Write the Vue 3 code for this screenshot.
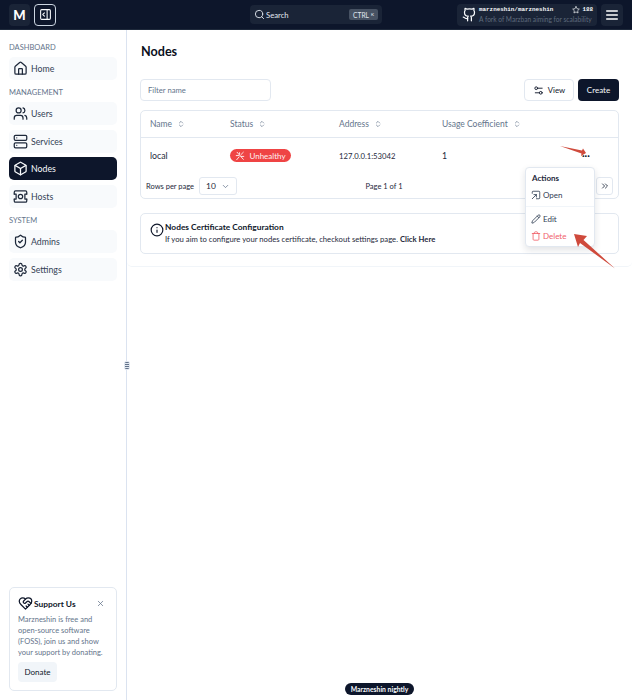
<template>
  <div class="page">
    <header class="topbar">
      <div class="top-left">
        <div class="logo">M</div>
        <button class="collapse">
          <svg class="ic" width="13" height="13" viewBox="0 0 24 24">
            <rect x="3" y="3" width="18" height="18" rx="2" />
            <path d="M15 3v18" />
            <path d="m10 15-3-3 3-3" />
          </svg>
        </button>
      </div>
      <div class="search">
        <span class="search-label">
          <svg class="ic" width="11" height="11" viewBox="0 0 24 24">
            <circle cx="11" cy="11" r="8" />
            <path d="m21 21-4.3-4.3" />
          </svg>
          Search
        </span>
        <span class="kbd">CTRL <small>K</small></span>
      </div>
      <div class="top-right">
        <div class="repo">
          <svg class="ic repo-icon" width="15" height="15" viewBox="0 0 24 24">
            <path d="M15 22v-4a4.8 4.8 0 0 0-1-3.5c3 0 6-2 6-5.5.08-1.25-.27-2.48-1-3.5.28-1.15.28-2.35 0-3.5 0 0-1 0-3 1.5-2.64-.5-5.36-.5-8 0C6 2 5 2 5 2c-.3 1.15-.3 2.35 0 3.5A5.403 5.403 0 0 0 4 9c0 3.5 3 5.5 6 5.5-.39.49-.68 1.05-.85 1.65-.17.6-.22 1.23-.15 1.85v4" />
            <path d="M9 18c-4.51 2-5-2-7-2" />
          </svg>
          <div class="repo-text">
            <div class="repo-line">
              <span class="repo-name">marzneshin/marzneshin</span>
              <span class="repo-stars">
                <svg class="ic" width="8" height="8" viewBox="0 0 24 24">
                  <path d="M12 2l3.09 6.26L22 9.27l-5 4.87 1.18 6.88L12 17.77l-6.18 3.25L7 14.14 2 9.27l6.91-1.01L12 2z" />
                </svg>
                188
              </span>
            </div>
            <div class="repo-desc">A fork of Marzban aiming for scalability</div>
          </div>
        </div>
        <button class="menu">
          <svg class="ic" width="16" height="16" viewBox="0 0 24 24">
            <path d="M4 6h16M4 12h16M4 18h16" />
          </svg>
        </button>
      </div>
    </header>

    <div class="body">
      <aside class="sidebar">
        <nav class="nav">
          <template v-for="group in navGroups" :key="group.title">
            <div class="nav-title">{{ group.title }}</div>
            <div class="nav-items">
              <a v-for="item in group.items" :key="item.label" class="nav-item" :class="{ active: item.label === 'Nodes' }">
                <svg class="ic" width="15" height="15" viewBox="0 0 24 24">
                  <path v-for="d in icons[item.icon].paths" :key="d" :d="d" />
                  <circle v-for="c in icons[item.icon].circles || []" :key="c[0] + '-' + c[1]" :cx="c[0]" :cy="c[1]" :r="c[2]" />
                  <rect v-for="r in icons[item.icon].rects || []" :key="r[1]" :x="r[0]" :y="r[1]" :width="r[2]" :height="r[3]" rx="2" />
                </svg>
                {{ item.label }}
              </a>
            </div>
          </template>
        </nav>

        <div class="support">
          <div class="support-head">
            <span class="support-title">
              <svg class="ic" width="15" height="15" viewBox="0 0 24 24">
                <path d="M19 14c1.49-1.46 3-3.21 3-5.5A5.5 5.5 0 0 0 16.5 3c-1.76 0-3 .5-4.5 2-1.5-1.5-2.74-2-4.5-2A5.5 5.5 0 0 0 2 8.5c0 2.3 1.5 4.05 3 5.5l7 7Z" />
                <path d="M12 5 9.04 7.96a2.17 2.17 0 0 0 0 3.08c.82.82 2.13.85 3 .07l2.07-1.9a2.82 2.82 0 0 1 3.79 0l2.96 2.66" />
                <path d="m18 15-2-2" />
                <path d="m15 18-2-2" />
              </svg>
              Support Us
            </span>
            <svg class="ic close" width="9" height="9" viewBox="0 0 24 24">
              <path d="M18 6 6 18M6 6l12 12" />
            </svg>
          </div>
          <p class="support-text">Marzneshin is free and<br />open-source software<br />(FOSS), join us and show<br />your support by donating.</p>
          <button class="donate">Donate</button>
        </div>
      </aside>

      <main class="main">
        <div class="content">
          <h1 class="title">Nodes</h1>

          <div class="toolbar">
            <div class="filter">Filter name</div>
            <div class="toolbar-actions">
              <button class="btn-view">
                <svg class="ic" width="11" height="11" viewBox="0 0 24 24">
                  <path d="M20 7h-9" />
                  <path d="M14 17H5" />
                  <circle cx="17" cy="17" r="3" />
                  <circle cx="7" cy="7" r="3" />
                </svg>
                View
              </button>
              <button class="btn-create">Create</button>
            </div>
          </div>

          <div class="table-card">
            <div class="row row-head">
              <div v-for="col in columns" :key="col" class="cell">
                {{ col }}
                <svg class="ic sort" width="8" height="8" viewBox="0 0 24 24">
                  <path d="m7 15 5 5 5-5" />
                  <path d="m7 9 5-5 5 5" />
                </svg>
              </div>
              <div class="cell"></div>
            </div>
            <div class="row row-body">
              <div class="cell">local</div>
              <div class="cell">
                <span class="badge">
                  <svg class="ic badge-icon" width="10" height="10" viewBox="0 0 24 24">
                    <path d="M5 3l15 17" />
                    <path d="M20 3l-6 6" />
                    <path d="M10 14l-6 7" />
                    <path d="M3 11h6" />
                    <path d="M15 13h6" />
                    <path d="M11 4v4" />
                  </svg>
                  Unhealthy
                </span>
              </div>
              <div class="cell address">127.0.0.1:53042</div>
              <div class="cell">1</div>
              <div class="cell dots">...</div>
            </div>
            <div class="pager">
              <div class="pager-left">
                Rows per page
                <div class="select">
                  10
                  <svg class="ic" width="9" height="9" viewBox="0 0 24 24">
                    <path d="m6 9 6 6 6-6" />
                  </svg>
                </div>
              </div>
              <div class="pager-mid">Page 1 of 1</div>
              <button class="pager-btn">
                <svg class="ic" width="10" height="10" viewBox="0 0 24 24">
                  <path d="m6 17 5-5-5-5" />
                  <path d="m13 17 5-5-5-5" />
                </svg>
              </button>
            </div>
          </div>

          <div class="cert">
            <svg class="ic cert-icon" width="14" height="14" viewBox="0 0 24 24">
              <circle cx="12" cy="12" r="10" />
              <path d="M12 16v-4" />
              <path d="M12 8h.01" />
            </svg>
            <div>
              <div class="cert-title">Nodes Certificate Configuration</div>
              <div class="cert-text">If you aim to configure your nodes certificate, checkout settings page. <b>Click Here</b></div>
            </div>
          </div>
        </div>
      </main>
    </div>

    <div class="menu-pop">
      <div class="pop-title">Actions</div>
      <div class="pop-item">
        <svg class="ic" width="10" height="10" viewBox="0 0 24 24">
          <path d="M3 8V5a2 2 0 0 1 2-2h14a2 2 0 0 1 2 2v14a2 2 0 0 1-2 2h-6" />
          <path d="M3 21 13 11" />
          <path d="M7 11h6v6" />
        </svg>
        Open
      </div>
      <div class="pop-sep"></div>
      <div class="pop-item">
        <svg class="ic" width="10" height="10" viewBox="0 0 24 24">
          <path d="M21.174 6.812a1 1 0 0 0-3.986-3.987L3.842 16.174a2 2 0 0 0-.5.83l-1.321 4.352a.5.5 0 0 0 .623.622l4.353-1.32a2 2 0 0 0 .83-.497z" />
          <path d="m15 5 4 4" />
        </svg>
        Edit
      </div>
      <div class="pop-item danger">
        <svg class="ic" width="10" height="10" viewBox="0 0 24 24">
          <path d="M3 6h18" />
          <path d="M19 6v14c0 1-1 2-2 2H7c-1 0-2-1-2-2V6" />
          <path d="M8 6V4c0-1 1-2 2-2h4c1 0 2 1 2 2v2" />
        </svg>
        Delete
      </div>
    </div>

    <svg class="arrows" width="632" height="700" viewBox="0 0 632 700">
      <polygon points="560,146 582,150.5 583,148.5 586,153 581,156 581.5,153.5" />
      <polygon points="574,234 587,236 583.5,240 615,268.5 580,243 578,247" />
    </svg>

    <div class="handle"></div>
    <div class="nightly">Marzneshin nightly</div>
  </div>
</template>

<script setup>
const icons = {
  home: {
    paths: [
      'M15 21v-8a1 1 0 0 0-1-1h-4a1 1 0 0 0-1 1v8',
      'M3 10a2 2 0 0 1 .709-1.528l7-5.999a2 2 0 0 1 2.582 0l7 5.999A2 2 0 0 1 21 10v9a2 2 0 0 1-2 2H5a2 2 0 0 1-2-2z',
    ],
  },
  users: {
    paths: ['M16 21v-2a4 4 0 0 0-4-4H6a4 4 0 0 0-4 4v2', 'M22 21v-2a4 4 0 0 0-3-3.87', 'M16 3.13a4 4 0 0 1 0 7.75'],
    circles: [[9, 7, 4]],
  },
  server: {
    paths: ['M6 6h.01', 'M6 18h.01'],
    rects: [
      [2, 2, 20, 8],
      [2, 14, 20, 8],
    ],
  },
  box: {
    paths: [
      'M21 8a2 2 0 0 0-1-1.73l-7-4a2 2 0 0 0-2 0l-7 4A2 2 0 0 0 3 8v8a2 2 0 0 0 1 1.73l7 4a2 2 0 0 0 2 0l7-4A2 2 0 0 0 21 16Z',
      'm3.3 7 8.7 5 8.7-5',
      'M12 22V12',
    ],
  },
  hosts: {
    paths: ['M2 8V5a2 2 0 0 1 2-2h16a2 2 0 0 1 2 2v3', 'M2 16v3a2 2 0 0 0 2 2h16a2 2 0 0 0 2-2v-3', 'M2 8h3v8H2', 'M22 8h-3v8h3'],
    circles: [[12, 12, 3.5]],
  },
  shield: {
    paths: [
      'M20 13c0 5-3.5 7.5-7.66 8.95a1 1 0 0 1-.67-.01C7.5 20.5 4 18 4 13V6a1 1 0 0 1 1-1c2 0 4.5-1.2 6.24-2.72a1.17 1.17 0 0 1 1.52 0C14.51 3.81 17 5 19 5a1 1 0 0 1 1 1z',
      'm9 12 2 2 4-4',
    ],
  },
  settings: {
    paths: [
      'M12.22 2h-.44a2 2 0 0 0-2 2v.18a2 2 0 0 1-1 1.73l-.43.25a2 2 0 0 1-2 0l-.15-.08a2 2 0 0 0-2.73.73l-.22.38a2 2 0 0 0 .73 2.73l.15.1a2 2 0 0 1 1 1.72v.51a2 2 0 0 1-1 1.74l-.15.09a2 2 0 0 0-.73 2.73l.22.38a2 2 0 0 0 2.73.73l.15-.08a2 2 0 0 1 2 0l.43.25a2 2 0 0 1 1 1.73V20a2 2 0 0 0 2 2h.44a2 2 0 0 0 2-2v-.18a2 2 0 0 1 1-1.73l.43-.25a2 2 0 0 1 2 0l.15.08a2 2 0 0 0 2.73-.73l.22-.39a2 2 0 0 0-.73-2.73l-.15-.08a2 2 0 0 1-1-1.74v-.5a2 2 0 0 1 1-1.74l.15-.09a2 2 0 0 0 .73-2.73l-.22-.38a2 2 0 0 0-2.73-.73l-.15.08a2 2 0 0 1-2 0l-.43-.25a2 2 0 0 1-1-1.73V4a2 2 0 0 0-2-2z',
    ],
    circles: [[12, 12, 3]],
  },
};

const navGroups = [
  { title: 'DASHBOARD', items: [{ label: 'Home', icon: 'home' }] },
  {
    title: 'MANAGEMENT',
    items: [
      { label: 'Users', icon: 'users' },
      { label: 'Services', icon: 'server' },
      { label: 'Nodes', icon: 'box' },
      { label: 'Hosts', icon: 'hosts' },
    ],
  },
  {
    title: 'SYSTEM',
    items: [
      { label: 'Admins', icon: 'shield' },
      { label: 'Settings', icon: 'settings' },
    ],
  },
];

const columns = ['Name', 'Status', 'Address', 'Usage Coefficient'];
</script>

<style>
html,
body {
  margin: 0;
  background: #fff;
}
</style>

<style scoped>
.page {
  position: relative;
  width: 632px;
  height: 700px;
  overflow: hidden;
  display: flex;
  flex-direction: column;
  font-family: Lato, "Liberation Sans", sans-serif;
  font-size: 8.75px;
  color: #0f172a;
}

button {
  font: inherit;
  border: 0;
  padding: 0;
}

.ic {
  fill: none;
  stroke: currentColor;
  stroke-width: 2;
  stroke-linecap: round;
  stroke-linejoin: round;
  flex: none;
}

/* top bar */
.topbar {
  height: 30px;
  flex: none;
  background: #0d162b;
  border-bottom: 1px solid #1e293b;
  box-sizing: border-box;
  padding: 0 9px;
  display: grid;
  grid-template-columns: 1fr auto 1fr;
  align-items: center;
  color: #f8fafc;
}

.top-left,
.top-right {
  display: flex;
  align-items: center;
  gap: 4px;
}

.top-right {
  justify-self: end;
}

.logo {
  width: 21px;
  height: 22px;
  border-radius: 4px;
  background: #1a2437;
  font-size: 13px;
  font-weight: 900;
  color: #fff;
  display: flex;
  align-items: center;
  justify-content: center;
}

.collapse {
  width: 22px;
  height: 22px;
  border-radius: 4px;
  border: 1px solid #cbd5e1;
  background: #0d162b;
  color: #f8fafc;
  display: flex;
  align-items: center;
  justify-content: center;
  box-sizing: border-box;
}

.search {
  width: 132px;
  height: 19px;
  box-sizing: border-box;
  padding: 0 4px;
  border-radius: 4px;
  background: #1a2437;
  display: flex;
  align-items: center;
  justify-content: space-between;
  color: #e2e8f0;
  font-size: 7.7px;
}

.search-label {
  display: flex;
  align-items: center;
  gap: 1px;
}

.kbd {
  height: 11px;
  width: 29px;
  box-sizing: border-box;
  border-radius: 2px;
  background: #475263;
  color: #e2e8f0;
  font-size: 6.6px;
  display: flex;
  align-items: center;
  justify-content: center;
  gap: 2px;
  white-space: nowrap;
}

.kbd small {
  font-size: 4.5px;
}

.repo {
  width: 140px;
  height: 22px;
  box-sizing: border-box;
  padding: 0 4px 0 5px;
  border-radius: 4px;
  background: #1a2437;
  display: flex;
  align-items: center;
  gap: 2px;
}

.repo-text {
  flex: 1;
  min-width: 0;
}

.repo-line {
  display: flex;
  justify-content: space-between;
  align-items: center;
  height: 9px;
  font-family: "Liberation Mono", monospace;
  font-size: 5.9px;
  font-weight: 700;
}

.repo-stars {
  display: flex;
  align-items: center;
  gap: 2px;
}

.repo-desc {
  font-size: 6.6px;
  line-height: 10px;
  color: #5f6b7d;
  white-space: nowrap;
}

.menu {
  width: 22px;
  height: 22px;
  border-radius: 4px;
  background: #1a2437;
  color: #fff;
  display: flex;
  align-items: center;
  justify-content: center;
}

/* sidebar */
.body {
  flex: 1;
  min-height: 0;
  display: flex;
}

.sidebar {
  width: 127px;
  flex: none;
  box-sizing: border-box;
  padding: 13px 9px 9px;
  border-right: 1px solid #dbe3f0;
  display: flex;
  flex-direction: column;
  justify-content: space-between;
}

.nav-title {
  font-size: 7.5px;
  line-height: 10px;
  color: #64748b;
  margin-bottom: 4px;
}

.nav-items {
  display: flex;
  flex-direction: column;
  gap: 4.7px;
  margin-bottom: 8px;
}

.nav-item {
  height: 23px;
  box-sizing: border-box;
  padding: 0 4px;
  border-radius: 5px;
  background: #f8fafc;
  color: #334155;
  font-size: 8.75px;
  display: flex;
  align-items: center;
  gap: 3px;
}

.nav-item .ic {
  color: #1e293b;
}

.nav-item.active {
  background: #0d162b;
  color: #f8fafc;
}

.nav-item.active .ic {
  color: #f8fafc;
}

.support {
  height: 104px;
  box-sizing: border-box;
  padding: 8px;
  border: 1px solid #e2e8f0;
  border-radius: 5px;
}

.support-head {
  display: flex;
  align-items: center;
  justify-content: space-between;
  height: 15px;
}

.support-title {
  display: flex;
  align-items: center;
  gap: 1px;
  font-size: 8.4px;
  font-weight: 700;
}

.close {
  color: #64748b;
  margin-right: 3px;
}

.support-text {
  margin: 2.5px 0 4.5px;
  font-size: 7.5px;
  line-height: 11px;
  color: #64748b;
  white-space: nowrap;
}

.donate {
  display: block;
  width: 39px;
  height: 20px;
  border-radius: 4px;
  background: #f1f5f9;
  color: #0f172a;
  font-size: 8px;
}

/* main */
.main {
  flex: 1;
  min-width: 0;
}

.content {
  box-sizing: border-box;
  height: 237px;
  padding: 14px 13px 0;
  border-bottom: 1px solid #f1f5f9;
  border-radius: 0 0 5px 5px;
}

.title {
  margin: 0;
  font-size: 12.6px;
  line-height: 16px;
  font-weight: 700;
  color: #0a0f1c;
  padding-left: 1px;
}

.toolbar {
  margin-top: 19px;
  display: flex;
  justify-content: space-between;
}

.filter {
  width: 131px;
  height: 22px;
  box-sizing: border-box;
  padding: 0 7px;
  border: 1px solid #e2e8f0;
  border-radius: 4px;
  color: #64748b;
  font-size: 7.7px;
  line-height: 20px;
}

.toolbar-actions {
  display: flex;
  gap: 4px;
}

.btn-view {
  width: 50px;
  height: 22px;
  box-sizing: border-box;
  border: 1px solid #e2e8f0;
  border-radius: 4px;
  background: #fff;
  color: #0f172a;
  font-size: 7.8px;
  display: flex;
  align-items: center;
  justify-content: center;
  gap: 4px;
}

.btn-create {
  width: 41px;
  height: 22px;
  border-radius: 4px;
  background: #0d162b;
  color: #f8fafc;
  font-size: 8px;
}

.table-card {
  margin-top: 9px;
  height: 89px;
  box-sizing: border-box;
  border: 1px solid #e2e8f0;
  border-radius: 5px;
}

.row {
  display: grid;
  grid-template-columns: 80px 109px 103px 1fr 38px;
  align-items: center;
  padding-left: 9px;
}

.row-head {
  height: 27px;
  border-bottom: 1px solid #e2e8f0;
  color: #64748b;
  box-sizing: border-box;
  font-size: 8.5px;
}

.row-body {
  height: 35px;
  color: #1e293b;
}

.cell {
  display: flex;
  align-items: center;
  gap: 5px;
  white-space: nowrap;
}

.address {
  font-size: 7.7px;
}

.sort {
  color: #64748b;
}

.badge {
  height: 13px;
  width: 61px;
  box-sizing: border-box;
  border-radius: 7px;
  background: #ef4444;
  color: #fef2f2;
  font-size: 8px;
  display: flex;
  align-items: center;
  justify-content: center;
  gap: 4px;
}

.badge-icon {
  stroke-width: 2.2;
}

.dots {
  font-weight: 900;
  font-size: 11px;
  color: #0f172a;
  padding-left: 2px;
  margin-top: -6px;
}

.pager {
  display: grid;
  grid-template-columns: 1fr auto 1fr;
  align-items: center;
  padding: 4px 5px 0;
  color: #1e293b;
  font-size: 7.5px;
}

.pager-left {
  display: flex;
  align-items: center;
  gap: 5px;
}

.pager-mid {
  margin-left: 9px;
}

.select {
  width: 38px;
  height: 18px;
  box-sizing: border-box;
  padding: 0 6px;
  border: 1px solid #e2e8f0;
  border-radius: 3px;
  display: flex;
  align-items: center;
  justify-content: space-between;
  font-size: 8.4px;
}

.select .ic {
  color: #64748b;
}

.pager-btn {
  justify-self: end;
  width: 17px;
  height: 18px;
  box-sizing: border-box;
  border: 1px solid #e2e8f0;
  border-radius: 3px;
  background: #fff;
  color: #1e293b;
  display: flex;
  align-items: center;
  justify-content: center;
}

.cert {
  margin-top: 14px;
  height: 41px;
  box-sizing: border-box;
  padding: 7px 9px;
  border: 1px solid #e2e8f0;
  border-radius: 5px;
  display: flex;
  align-items: flex-start;
  gap: 1px;
}

.cert-icon {
  margin-top: 2px;
}

.cert-title {
  font-size: 8.4px;
  line-height: 12px;
  font-weight: 700;
}

.cert-text {
  font-size: 7.7px;
  line-height: 12px;
  color: #1e293b;
}

/* things lying over the page */
.menu-pop {
  position: absolute;
  left: 525px;
  top: 167px;
  width: 70px;
  height: 80px;
  box-sizing: border-box;
  padding: 5px 3px;
  background: #fff;
  border: 1px solid #e2e8f0;
  border-radius: 4px;
  box-shadow: 0 3px 7px rgba(15, 23, 42, 0.12);
  font-size: 8px;
}

.pop-title {
  padding-left: 3px;
  font-size: 8px;
  font-weight: 700;
  line-height: 10px;
  color: #1e293b;
  margin-bottom: 3px;
}

.pop-item {
  display: flex;
  align-items: center;
  gap: 2px;
  height: 18px;
  padding-left: 2px;
  color: #334155;
}

.pop-item.danger {
  color: #f0616a;
  margin-top: -1px;
}

.pop-sep {
  height: 1px;
  background: #f1f5f9;
  margin: 2px -3px 3px;
}

.arrows {
  position: absolute;
  left: 0;
  top: 0;
  pointer-events: none;
}

.arrows polygon {
  fill: #cf4a3c;
}

.handle {
  position: absolute;
  left: 124px;
  top: 361px;
  width: 6px;
  height: 9px;
  box-sizing: border-box;
  border: 1px solid #e2e8f0;
  border-radius: 2px;
  background: repeating-linear-gradient(#64748b 0 1px, #e2e8f0 1px 2px);
}

.nightly {
  position: absolute;
  left: 345px;
  top: 683px;
  width: 69px;
  height: 12px;
  border-radius: 6px;
  background: #0d162b;
  color: #f8fafc;
  font-size: 6.8px;
  font-weight: 700;
  line-height: 12px;
  text-align: center;
  white-space: nowrap;
}
</style>
